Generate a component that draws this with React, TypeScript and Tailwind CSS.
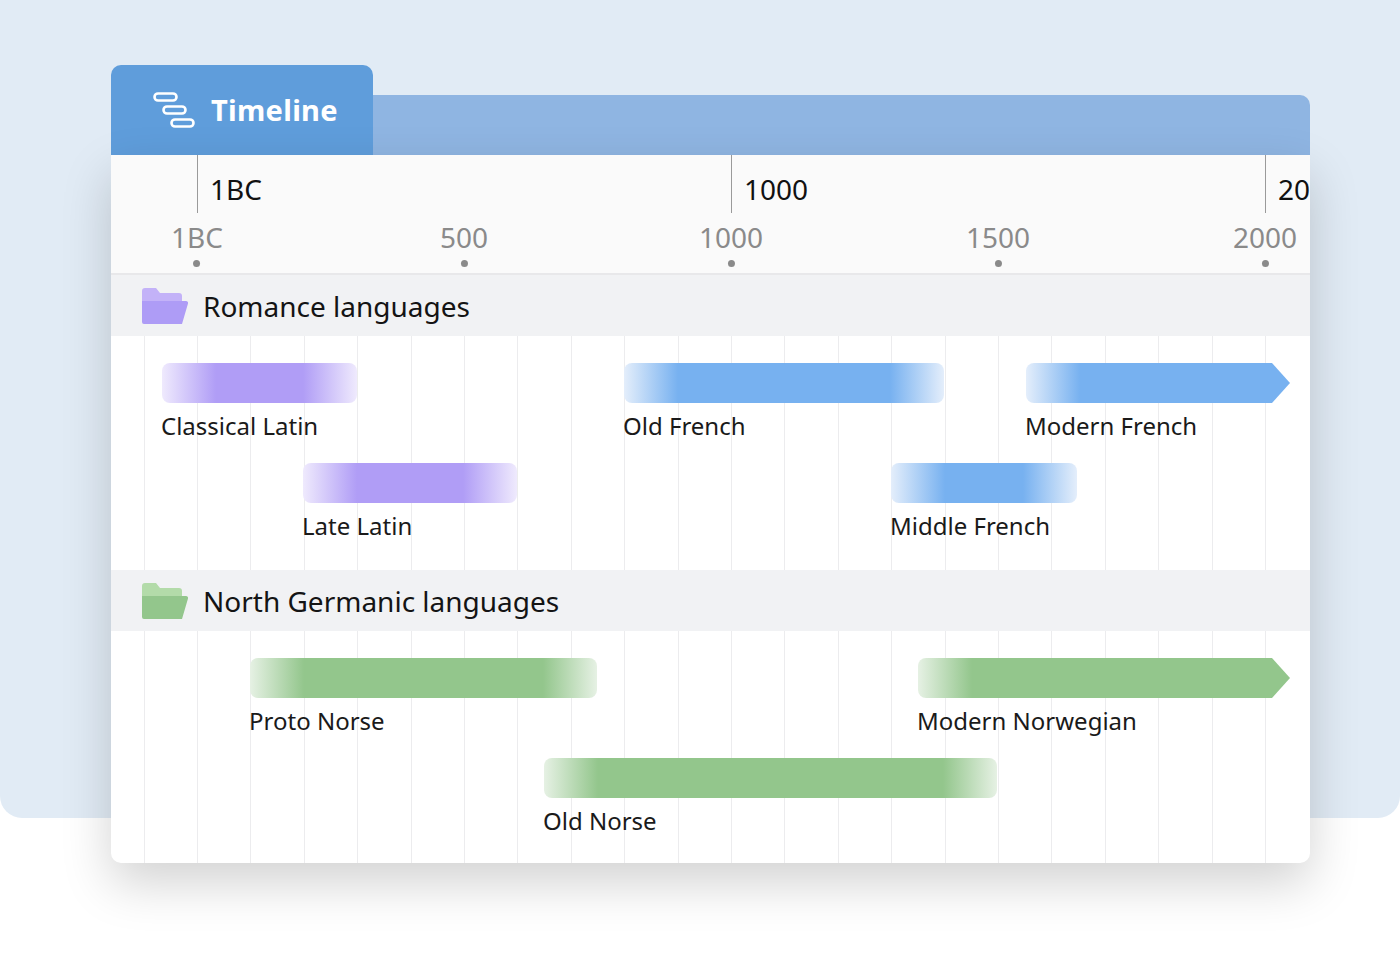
import React from 'react';

const X0 = 86; // 1BC position inside card (197 - 111)
const PX = 0.534;
const xOf = (year: number) => X0 + year * PX;

type Bar = { label: string; from: number; to: number; row: number; arrow?: boolean; color: string; fade: string };

const font = { fontFamily: '"Noto Sans", "Open Sans", sans-serif' };

const PURPLE = { color: '#b09df6', fade: '#efeafd' };
const BLUE = { color: '#77b1f0', fade: '#e4eefb' };
const GREEN = { color: '#93c68c', fade: '#e6f1e4' };

const GridLines: React.FC = () => {
  const lines = [];
  for (let i = -1; i <= 21; i++) lines.push(X0 + i * 53.4);
  return (
    <>
      {lines.map((x) => (
        <div key={x} className="absolute top-0 bottom-0 w-px bg-[#ececee]" style={{ left: x }} />
      ))}
    </>
  );
};

const TimelineBar: React.FC<{ bar: Bar }> = ({ bar }) => {
  const { color, fade } = bar;
  const top = bar.row === 0 ? 27 : 127;
  return (
    <div className="absolute" style={{ left: bar.from, top, width: bar.to - bar.from }}>
      <div className="relative h-10 flex">
        <div
          className="h-10 w-[54px] rounded-l-lg"
          style={{ background: `linear-gradient(to right, ${fade}, ${color})` }}
        />
        <div className="h-10 flex-1" style={{ background: color }} />
        {bar.arrow ? (
          <svg width="18" height="40" viewBox="0 0 18 40" className="block">
            <polygon points="0,0 0,40 18,20" fill={color} />
          </svg>
        ) : (
          <div
            className="h-10 w-[54px] rounded-r-lg"
            style={{ background: `linear-gradient(to left, ${fade}, ${color})` }}
          />
        )}
      </div>
      <div className="text-[24px] leading-none mt-[11px] text-[#1a1a1a] whitespace-nowrap -ml-px">{bar.label}</div>
    </div>
  );
};

const Folder: React.FC<{ back: string; front: string }> = ({ back, front }) => (
  <svg width="46" height="36" viewBox="0 0 46 36">
    <path d="M0 3a3 3 0 0 1 3-3h11l4 5h19a3 3 0 0 1 3 3v5H0z" fill={back} />
    <path d="M0 13h44a2 2 0 0 1 2 2.5L40 36H2a2 2 0 0 1-2-2z" fill={front} />
  </svg>
);

const Group: React.FC<{ title: string; bars: Bar[]; back: string; front: string }> = ({ title, bars, back, front }) => (
  <div>
    <div className="h-[61px] bg-[#f1f2f4] flex items-center pl-[31px] gap-[15px]">
      <Folder back={back} front={front} />
      <span className="text-[28px] text-[#141414]">{title}</span>
    </div>
    <div className="relative h-[234px]">
      <GridLines />
      {bars.map((b) => (
        <TimelineBar key={b.label} bar={b} />
      ))}
    </div>
  </div>
);

const romance: Bar[] = [
  { label: 'Classical Latin', from: 51, to: 246, row: 0, ...PURPLE },
  { label: 'Old French', from: 513, to: 833, row: 0, ...BLUE },
  { label: 'Modern French', from: 915, to: 1179, row: 0, arrow: true, ...BLUE },
  { label: 'Late Latin', from: 192, to: 406, row: 1, ...PURPLE },
  { label: 'Middle French', from: 780, to: 966, row: 1, ...BLUE },
];

const norse: Bar[] = [
  { label: 'Proto Norse', from: 139, to: 486, row: 0, ...GREEN },
  { label: 'Modern Norwegian', from: 807, to: 1179, row: 0, arrow: true, ...GREEN },
  { label: 'Old Norse', from: 433, to: 886, row: 1, ...GREEN },
];

export default function App() {
  const ticks = [
    { label: '1BC', y: 0 },
    { label: '500', y: 500 },
    { label: '1000', y: 1000 },
    { label: '1500', y: 1500 },
    { label: '2000', y: 2000 },
  ];
  return (
    <div className="relative w-[1400px] h-[955px] bg-white overflow-hidden" style={font}>
      <div className="absolute left-0 top-0 w-[1400px] h-[818px] bg-[#e1ebf5] rounded-b-[22px]" />
      <div className="absolute left-[111px] top-[65px] w-[1199px] h-[798px] flex flex-col">
        <div className="flex h-[90px] items-end">
          <div className="w-[262px] h-[90px] bg-[#5f9ddb] rounded-t-[10px] flex items-center gap-[16px] pl-[42px]">
            <svg width="42" height="36" viewBox="0 0 42 36" fill="none" stroke="white" strokeWidth="2.6">
              <rect x="1.5" y="1.5" width="22" height="7" rx="3.5" />
              <rect x="10.5" y="14.5" width="22" height="7" rx="3.5" />
              <rect x="18.5" y="27.5" width="22" height="7" rx="3.5" />
            </svg>
            <span className="text-white text-[29px] font-bold tracking-[0.3px]">Timeline</span>
          </div>
          <div className="flex-1 h-[60px] bg-[#8fb5e2] rounded-tr-[10px]" />
        </div>
        <div className="flex-1 bg-white rounded-b-[10px] overflow-hidden shadow-[0_20px_50px_rgba(0,0,0,0.18)]">
          <div className="relative h-[120px] bg-[#fafafa] border-b-2 border-[#e8e8ea] overflow-hidden">
            {[0, 1000, 2000].map((y) => (
              <div key={y} className="absolute top-0 h-[58px] w-px bg-[#9a9a9a]" style={{ left: xOf(y) }}>
                <span className="absolute left-[13px] top-[20px] text-[28px] leading-none text-[#111]">
                  {y === 0 ? '1BC' : y}
                </span>
              </div>
            ))}
            {ticks.map((t) => (
              <div key={t.label} className="absolute top-[68px] flex flex-col items-center -translate-x-1/2" style={{ left: xOf(t.y) }}>
                <span className="text-[28px] leading-none text-[#8a8a8a]">{t.label}</span>
                <span className="mt-[9px] w-[7px] h-[7px] rounded-full bg-[#8a8a8a]" />
              </div>
            ))}
          </div>
          <Group title="Romance languages" bars={romance} back="#c3b2f8" front="#ae9cf6" />
          <Group title="North Germanic languages" bars={norse} back="#b3dba9" front="#93c68c" />
        </div>
      </div>
    </div>
  );
}
